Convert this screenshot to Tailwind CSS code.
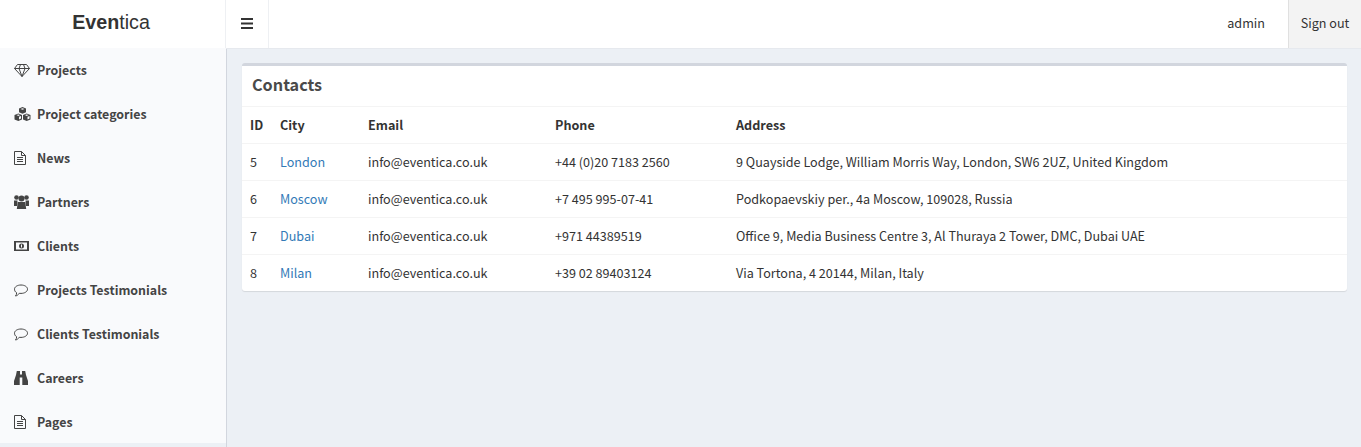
<!DOCTYPE html>
<html><head><meta charset="utf-8">
<script src="https://cdn.jsdelivr.net/npm/@tailwindcss/browser@4"></script>
<title>Eventica</title></head>
<body class="h-[447px] overflow-hidden bg-[#ecf0f5] text-[#333] text-[12.6px] font-['Noto_Sans_CJK_SC','Source_Sans_Pro',sans-serif]">
<header class="flex h-[49px] bg-white border-b border-[#e6e9ee]">
  <div class="w-[225px] flex items-center justify-center pb-[3px] pr-[3px] text-[19.7px] text-[#333] font-['Liberation_Sans',sans-serif]"><b>Even</b>tica</div>
  <div class="w-[44px] flex items-center justify-center pb-[2px] border-x border-[#eef0f3]">
    <svg class="w-[12px] h-[11px]" viewBox="0 0 12 11" fill="#333"><rect y="0" width="12" height="2"/><rect y="4.5" width="12" height="2"/><rect y="9" width="12" height="2"/></svg>
  </div>
  <div class="flex-1 flex justify-end items-center">
    <span class="mr-[23px] pb-[2px]">admin</span>
    <span class="w-[73px] h-full bg-[#f3f3f3] border-l border-[#e0e0e0] flex items-center justify-center pb-[2px]">Sign out</span>
  </div>
</header>
<div class="flex h-[398px]">
  <aside class="w-[227px] shrink-0 border-r border-[#d2d6de]">
    <nav class="h-[395px] bg-[#f9fafc] font-bold text-[12.4px] text-[#444]">
      <a class="flex items-center h-[44px] pl-[14px] gap-[7px] -mt-[1px]"><svg class="w-[16px] h-[13px]" viewBox="0 0 16 13" fill="none" stroke="#444" stroke-width="1"><path d="M3.500.500h9L15.500 4.500 8 12.500.500 4.500zM.500 4.500h15M5 4.500l3 8 3-8M5 4.500l1.500-4M11 4.500 9.500.500"/></svg><span>Projects</span></a>
      <a class="flex items-center h-[44px] pl-[14px] gap-[6px]"><svg class="w-[17px] h-[14px]" viewBox="0 0 17 14" fill="#444"><path d="M8.500 0l3.500 1.500v3.700L8.500 6.700 5 5.200V1.500z"/><path d="M4.300 6.500l3.700 1.600v4.300L4.300 14 .5 12.400V8.100z"/><path d="M12.700 6.500l3.800 1.600v4.300L12.700 14 9 12.400V8.100z"/><path fill="#f9fafc" d="M6.500 2l2-.8 2 .8-2 .8zM2.500 8.100l1.800-.7 1.800.7-1.800.8zM5 9.800l2-.8v2.600l-2 .9zM10.900 8.100l1.800-.7 1.800.7-1.800.8zM13.500 9.800l2-.8v2.600l-2 .9z"/></svg><span>Project categories</span></a>
      <a class="flex items-center h-[44px] pl-[14px] gap-[11px]"><svg class="w-[12px] h-[14px]" viewBox="0 0 12 14" fill="none" stroke="#444"><path d="M.5.500h7l4 4v9H.5zM7.500.500v4h4M3 6.500h6M3 8.500h6M3 10.500h6"/></svg><span>News</span></a>
      <a class="flex items-center h-[44px] pl-[14px] gap-[8px]"><svg class="w-[15px] h-[14px]" viewBox="0 0 15 14" fill="#444"><circle cx="2.500" cy="2.500" r="2.300"/><circle cx="12.500" cy="2.500" r="2.300"/><circle cx="7.500" cy="3.500" r="3"/><path d="M0 5.500h3.500L3 11H0zM15 5.500h-3.500l.5 5.500h3zM3.800 7h7.400l1 7H2.800z"/></svg><span>Partners</span></a>
      <a class="flex items-center h-[44px] pl-[14px] gap-[8px]"><svg class="w-[15px] h-[10px]" viewBox="0 0 15 10"><rect width="15" height="10" fill="#444"/><rect x="2" y="1.500" width="11" height="7" fill="#f9fafc"/><circle cx="7.500" cy="5" r="2.500" fill="#444"/><rect x="7" y="3.500" width="1" height="3" fill="#f9fafc"/></svg><span>Clients</span></a>
      <a class="flex items-center h-[44px] pl-[14px] gap-[9px]"><svg class="w-[14px] h-[13px]" viewBox="0 0 14 13" fill="none" stroke="#444"><path d="M7 1c3.600 0 6.500 1.800 6.500 4.200S10.600 9.400 7 9.400c-.6 0-1.200 0-1.700-.1C4.500 10.500 3 11.800 1.500 12c.8-1 1.200-2 1.100-3.300C1.300 8 .5 6.700.5 5.200.5 2.800 3.400 1 7 1z"/></svg><span>Projects Testimonials</span></a>
      <a class="flex items-center h-[44px] pl-[14px] gap-[9px]"><svg class="w-[14px] h-[13px]" viewBox="0 0 14 13" fill="none" stroke="#444"><path d="M7 1c3.600 0 6.500 1.800 6.500 4.200S10.600 9.400 7 9.400c-.6 0-1.200 0-1.700-.1C4.500 10.500 3 11.800 1.500 12c.8-1 1.200-2 1.100-3.300C1.300 8 .5 6.700.5 5.200.5 2.800 3.400 1 7 1z"/></svg><span>Clients Testimonials</span></a>
      <a class="flex items-center h-[44px] pl-[14px] gap-[9px]"><svg class="w-[14px] h-[14px]" viewBox="0 0 14 14" fill="#444"><path d="M2.800 0h3.200v3.500h2V0h3.200l.8 4 2 6v4H8.300V6.500H5.700V14H0v-4l2-6z"/><rect x="5.800" y="4" width="2.400" height="1.500"/></svg><span>Careers</span></a>
      <a class="flex items-center h-[44px] pl-[14px] gap-[11px]"><svg class="w-[12px] h-[14px]" viewBox="0 0 12 14" fill="none" stroke="#444"><path d="M.5.500h7l4 4v9H.5zM7.500.500v4h4M3 6.500h6M3 8.500h6M3 10.500h6"/></svg><span>Pages</span></a>
    </nav>
  </aside>
  <main class="flex-1 pl-[15px] pr-[14px] pt-[14px]">
    <section class="bg-white rounded-[3px] border-t-[3px] border-[#d2d6de] shadow-[0_1px_1px_rgba(0,0,0,0.1)]">
      <h3 class="h-[41px] flex items-center pl-[10px] pb-[3px] text-[16.2px] text-[#4a4a4a] font-bold border-b border-[#f4f4f4]">Contacts</h3>
      <table class="w-full table-fixed border-separate border-spacing-0">
        <colgroup><col class="w-[30px]"><col class="w-[88px]"><col class="w-[187px]"><col class="w-[181px]"><col></colgroup>
        <thead><tr class="h-[37px] font-bold text-left"><th class="pl-[8px] border-b border-[#f4f4f4]">ID</th><th class="pl-[8px] border-b border-[#f4f4f4]">City</th><th class="pl-[8px] border-b border-[#f4f4f4]">Email</th><th class="pl-[8px] border-b border-[#f4f4f4]">Phone</th><th class="pl-[8px] border-b border-[#f4f4f4]">Address</th></tr></thead>
        <tbody>
          <tr class="h-[37px]"><td class="pl-[8px] border-b border-[#f4f4f4]">5</td><td class="pl-[8px] border-b border-[#f4f4f4] text-[#337ab7]">London</td><td class="pl-[8px] border-b border-[#f4f4f4]">info@eventica.co.uk</td><td class="pl-[8px] border-b border-[#f4f4f4]">+44 (0)20 7183 2560</td><td class="pl-[8px] border-b border-[#f4f4f4]">9 Quayside Lodge, William Morris Way, London, SW6 2UZ, United Kingdom</td></tr>
          <tr class="h-[37px]"><td class="pl-[8px] border-b border-[#f4f4f4]">6</td><td class="pl-[8px] border-b border-[#f4f4f4] text-[#337ab7]">Moscow</td><td class="pl-[8px] border-b border-[#f4f4f4]">info@eventica.co.uk</td><td class="pl-[8px] border-b border-[#f4f4f4]">+7 495 995-07-41</td><td class="pl-[8px] border-b border-[#f4f4f4]">Podkopaevskiy per., 4a Moscow, 109028, Russia</td></tr>
          <tr class="h-[37px]"><td class="pl-[8px] border-b border-[#f4f4f4]">7</td><td class="pl-[8px] border-b border-[#f4f4f4] text-[#337ab7]">Dubai</td><td class="pl-[8px] border-b border-[#f4f4f4]">info@eventica.co.uk</td><td class="pl-[8px] border-b border-[#f4f4f4]">+971 44389519</td><td class="pl-[8px] border-b border-[#f4f4f4]">Office 9, Media Business Centre 3, Al Thuraya 2 Tower, DMC, Dubai UAE</td></tr>
          <tr class="h-[36px]"><td class="pl-[8px] pt-[1px]">8</td><td class="pl-[8px] pt-[1px] text-[#337ab7]">Milan</td><td class="pl-[8px] pt-[1px]">info@eventica.co.uk</td><td class="pl-[8px] pt-[1px]">+39 02 89403124</td><td class="pl-[8px] pt-[1px]">Via Tortona, 4 20144, Milan, Italy</td></tr>
        </tbody>
      </table>
    </section>
  </main>
</div>
</body></html>
